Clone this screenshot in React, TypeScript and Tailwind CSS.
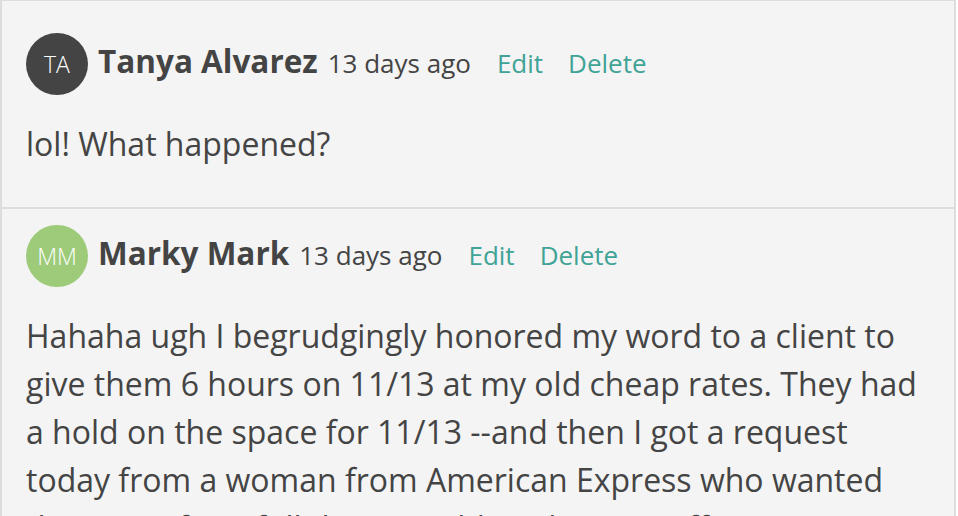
const comments = [
  {
    initials: "TA",
    name: "Tanya Alvarez",
    ago: "13 days ago",
    avatar: "bg-[#444444]",
    body: "lol! What happened?",
    pad: "pt-[32px] pb-[39px]",
    gap: "mt-[25px]",
  },
  {
    initials: "MM",
    name: "Marky Mark",
    ago: "13 days ago",
    avatar: "bg-[#9dcb7a]",
    body:
      "Hahaha ugh I begrudgingly honored my word to a client to give them 6 hours on 11/13 at my old cheap rates. They had a hold on the space for 11/13 --and then I got a request today from a woman from American Express who wanted the space for a full day, possibly to host an offsite training at my new rates.",
    pad: "pt-[16px] pb-[39px]",
    gap: "mt-[25px]",
  },
];

const Comment = ({ c, first }: { c: (typeof comments)[number]; first: boolean }) => (
  <div
    className={`px-[24px] ${c.pad} ${first ? "border-t border-[#dddddd]" : "border-t-2 border-[#dddddd]"}`}
  >
    <div className="flex items-center">
      <div
        className={`flex h-[62px] w-[62px] shrink-0 items-center justify-center rounded-full ${c.avatar} text-[23px] font-light text-white`}
      >
        {c.initials}
      </div>
      <div className="ml-[10px] flex items-baseline pb-[7px] whitespace-nowrap">
        <span className="text-[31.5px] font-bold text-[#444444]">{c.name}</span>
        <span className="ml-[10px] text-[26px] text-[#444444]">{c.ago}</span>
        <a className="ml-[26px] text-[26px] text-[#3fa396]">Edit</a>
        <a className="ml-[25px] text-[26px] text-[#3fa396]">Delete</a>
      </div>
    </div>
    <p className={`${c.gap} text-[32px] leading-[48px] text-[#444444]`}>{c.body}</p>
  </div>
);

export default function App() {
  return (
    <div className="h-[516px] overflow-hidden bg-white font-['Open_Sans',sans-serif]">
      <div className="w-[956px] border-x-2 border-[#dddddd] bg-[#f4f4f4]">
        {comments.map((c, i) => (
          <Comment key={c.initials} c={c} first={i === 0} />
        ))}
      </div>
    </div>
  );
}
